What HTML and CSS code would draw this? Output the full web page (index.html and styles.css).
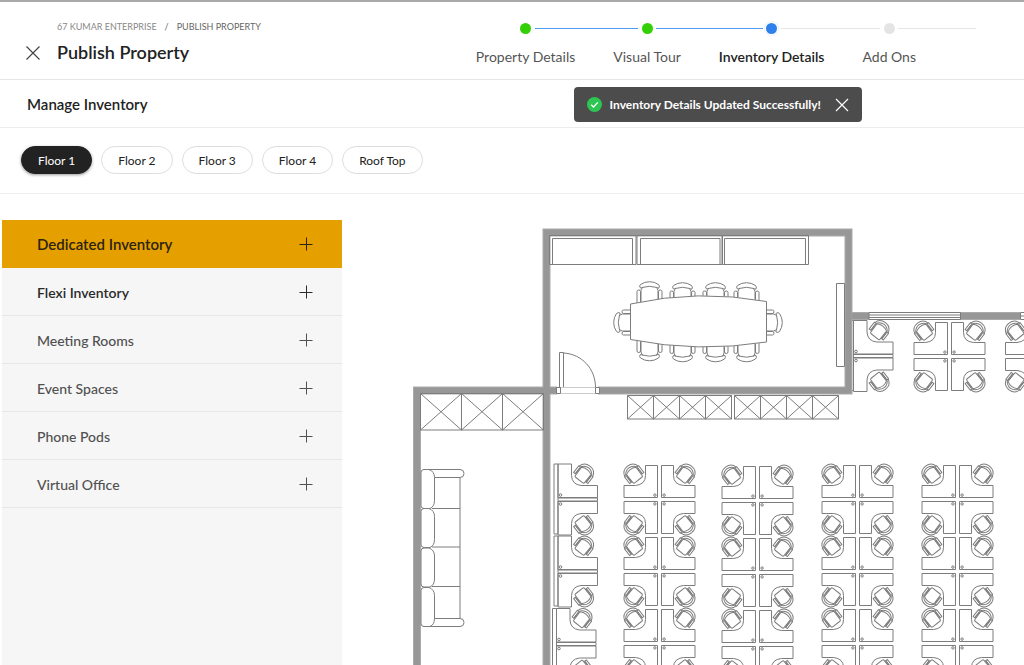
FILE: index.html
```
<!DOCTYPE html>
<html lang="en">
<head>
  <meta charset="UTF-8">
  <title>Publish Property</title>
  <link rel="stylesheet" href="styles.css">
</head>
<body>
  <header class="header">
    <button class="icon-btn close-page" aria-label="Close">
      <svg width="14" height="14" viewBox="0 0 14 14"><path d="M.5 .5l13 13M13.5 .5L.5 13.5"/></svg>
    </button>
    <div class="heading">
      <nav class="breadcrumb">
        <a href="#">67 KUMAR ENTERPRISE</a>
        <span class="slash">/</span>
        <a href="#" class="current">PUBLISH PROPERTY</a>
      </nav>
      <h1>Publish Property</h1>
    </div>
    <ol class="steps">
      <li class="step done"><i class="dot"></i>Property Details</li>
      <li class="step done"><i class="dot"></i>Visual Tour</li>
      <li class="step active"><i class="dot"></i>Inventory Details</li>
      <li class="step"><i class="dot"></i>Add Ons</li>
    </ol>
  </header>

  <div class="subheader">
    <h2>Manage Inventory</h2>
    <div class="toast" role="status">
      <svg width="15" height="15" viewBox="0 0 15 15"><circle cx="7.5" cy="7.5" r="7.5" fill="#2dc653"/><path d="M4.2 7.8l2.3 2.2 4.3-4.6" fill="none" stroke="#fff" stroke-width="1.3"/></svg>
      <span>Inventory Details Updated Successfully!</span>
      <button class="icon-btn" aria-label="Dismiss">
        <svg width="14" height="14" viewBox="0 0 14 14"><path d="M1 1l12 12M13 1L1 13"/></svg>
      </button>
    </div>
  </div>

  <div class="floors">
    <button class="floor selected">Floor 1</button>
    <button class="floor">Floor 2</button>
    <button class="floor">Floor 3</button>
    <button class="floor">Floor 4</button>
    <button class="floor">Roof Top</button>
  </div>

  <div class="content">
    <aside class="sidebar">
      <button class="item highlighted">Dedicated Inventory <svg class="plus" viewBox="0 0 14 14"><path d="M7.5 .5v13M.5 7.5h13"/></svg></button>
      <button class="item strong">Flexi Inventory <svg class="plus" viewBox="0 0 14 14"><path d="M7.5 .5v13M.5 7.5h13"/></svg></button>
      <button class="item">Meeting Rooms <svg class="plus" viewBox="0 0 14 14"><path d="M7.5 .5v13M.5 7.5h13"/></svg></button>
      <button class="item">Event Spaces <svg class="plus" viewBox="0 0 14 14"><path d="M7.5 .5v13M.5 7.5h13"/></svg></button>
      <button class="item">Phone Pods <svg class="plus" viewBox="0 0 14 14"><path d="M7.5 .5v13M.5 7.5h13"/></svg></button>
      <button class="item">Virtual Office <svg class="plus" viewBox="0 0 14 14"><path d="M7.5 .5v13M.5 7.5h13"/></svg></button>
    </aside>

    <main class="plan">
      <svg viewBox="342 194 682 471" preserveAspectRatio="xMinYMin slice" aria-label="Floor 1 plan">
        <defs>
          <!-- desk chair, back at the top -->
          <g id="chair">
            <path d="M-6 -4.5Q0 -8 6 -4.5L5.8 6Q5.6 7 4.5 7H-4.5Q-5.6 7 -5.8 6Z"/>
            <path d="M-8.5 -4Q-7 -10.5 0 -10.5T8.5 -4M-7 -4.5Q-4 -8.5 0 -8.5T7 -4.5"/>
            <path d="M-9 -4H-6.8V4.500H-9ZM9 -4H6.800V4.500H9Z"/>
            <path class="dark" d="M-7 -3V4.500M7 -3V4.500"/>
          </g>
          <g id="seat">
            <path d="M-9.5 -16Q-10.5 -17.5 -9 -19Q-5 -21.8 0 -21.8T9 -19Q10.5 -17.5 9.5 -15.5Q8.5 -14.8 7.5 -16Q0 -18.4 -7.5 -16Q-8.5 -14.8 -9.5 -16Z"/>
            <path d="M-8.5 -2V-13Q-8 -15.5 -6.5 -16.2M8.5 -2V-13Q8 -15.5 6.5 -16.2"/>
            <path d="M-12.5 0V-12Q-12.5 -13.5 -10.8 -13.5T-9 -12V0M12.5 0V-12Q12.5 -13.5 10.8 -13.5T9 -12V0"/>
          </g>
          <g id="station">
            <path d="M-14 -34H-2V-2H-35.5V-14H-24Q-14 -15 -14 -24Z"/>
            <circle cx="-4.6" cy="-4.4" r="1.2"/>
            <use href="#chair" transform="translate(-25.5 -25) rotate(-38)"/>
          </g>
          <g id="quad">
            <use href="#station"/>
            <use href="#station" transform="scale(-1 1)"/>
            <use href="#station" transform="scale(1 -1)"/>
            <use href="#station" transform="scale(-1 -1)"/>
          </g>
          <g id="wall-desk">
            <path d="M0 -35.5H13.5V-24Q14 -15 23 -14H39.5V-2H0Z"/>
            <circle cx="2.5" cy="-4.5" r="1.3"/>
            <use href="#chair" transform="translate(25.5 -25) rotate(38)"/>
          </g>
          <g id="wall-pair">
            <path d="M-4 -35.5H0V34.5H-4ZM0 -1.5H39.5V1.5H0"/>
            <use href="#wall-desk"/>
            <use href="#wall-desk" transform="scale(1 -1)"/>
          </g>
          <path id="locker" d="M0 0H41V36.5H0ZM0 0L41 36.5M41 0L0 36.5"/>
          <path id="cabinet" d="M0 0H26V23.5H0ZM0 0L26 23.5M26 0L0 23.5"/>
          <path id="cushion" d="M421 3Q421 0 424 0H429Q434.5 2 434.5 8V31Q434.5 37 430 39H424Q421 39 421 36Z"/>
          <path id="walls" d="M546.5 665V232.5H848.5V390.5H598M417 665V390.5H557M852 316H869M960 316H1020"/>
        </defs>

        <g class="lines">
          <use href="#wall-pair" x="558" y="499.5"/>
          <use href="#wall-pair" x="558" y="571.5"/>
          <use href="#wall-pair" x="556.5" y="644"/>
          <use href="#wall-pair" x="853.5" y="356"/>

          <use href="#quad" x="949.5" y="356.5"/>
          <use href="#quad" x="1041" y="356.5"/>

          <use href="#quad" x="659.5" y="499.5"/>
          <use href="#quad" x="659.5" y="571.5"/>
          <use href="#quad" x="659.5" y="643.5"/>
          <use href="#quad" x="757.5" y="500.5"/>
          <use href="#quad" x="757.5" y="572.5"/>
          <use href="#quad" x="757.5" y="644.5"/>
          <use href="#quad" x="857.5" y="499.5"/>
          <use href="#quad" x="857.5" y="571.5"/>
          <use href="#quad" x="857.5" y="643.5"/>
          <use href="#quad" x="957.5" y="499.5"/>
          <use href="#quad" x="957.5" y="571.5"/>
          <use href="#quad" x="957.5" y="643.5"/>
        </g>

        <use href="#walls" class="wall-edge"/>
        <use href="#walls" class="wall"/>

        <g class="lines">
          <!-- windows -->
          <path d="M869 312.5H960.5V319.5H869ZM869 315H960.5M869 317.5H960.5M1030 312.5H1020.5V319.5H1030M1020 316H1030"/>

          <!-- meeting room -->
          <path d="M549.5 235.5H636V264.5H549.5ZM552.5 264.5V238.5H632.5V264.5"/>
          <path d="M637 235.5H722V264.5H637ZM640.5 264.5V238.5H720V264.5"/>
          <path d="M722.5 235.5H808.5V264.5H722.5ZM724.5 264.5V238.5H805.5V264.5"/>
          <path class="fill" d="M836.5 283.5H844.5V366.5H836.5Z"/>
          <use href="#seat" x="649.5" y="303.5"/>
          <use href="#seat" x="682.5" y="304.5"/>
          <use href="#seat" x="715.5" y="304.5"/>
          <use href="#seat" x="746.5" y="304.5"/>
          <use href="#seat" transform="translate(649.5 339) scale(1 -1)"/>
          <use href="#seat" transform="translate(682.5 340) scale(1 -1)"/>
          <use href="#seat" transform="translate(715.5 340) scale(1 -1)"/>
          <use href="#seat" transform="translate(746.5 340) scale(1 -1)"/>
          <use href="#seat" transform="translate(635.5 322.5) rotate(-90)"/>
          <use href="#seat" transform="translate(760.5 322.5) rotate(90)"/>
          <path class="fill" d="M630.5 304Q698 289 766.5 301.5V342Q698 353 630.5 339.5Z"/>

          <!-- door -->
          <path d="M559.5 352.5H563.5V387.5H559.5ZM563.5 353C582 354 595.5 369 595.5 387.5"/>
          <path class="fill" d="M556.5 387.5H560.5V393.5H556.5ZM595.5 387.5H599.5V393.5H595.5Z"/>
          <path class="faint" d="M561 387.5H595M561 393.5H595"/>

          <!-- storage -->
          <use href="#locker" x="420.5" y="393.5"/>
          <use href="#locker" x="461.5" y="393.5"/>
          <use href="#locker" x="502.5" y="393.5"/>
          <use href="#cabinet" x="627.5" y="395.5"/>
          <use href="#cabinet" x="653.5" y="395.5"/>
          <use href="#cabinet" x="679.5" y="395.5"/>
          <use href="#cabinet" x="705.5" y="395.5"/>
          <use href="#cabinet" x="734.5" y="395.5"/>
          <use href="#cabinet" x="760.5" y="395.5"/>
          <use href="#cabinet" x="786.5" y="395.5"/>
          <use href="#cabinet" x="812.5" y="395.5"/>

          <!-- sofa -->
          <path d="M429 469.5H460Q464 469.5 464 473.5T460 477.5H434.5M429 626.5H460Q464 626.5 464 622.5T460 618.5H434.5M460 477.5V618.5M432 508.5H460M432 547H460M432 586.5H460"/>
          <use href="#cushion" y="469.5"/>
          <use href="#cushion" y="508.5"/>
          <use href="#cushion" y="548"/>
          <use href="#cushion" y="587.5"/>
        </g>
      </svg>
    </main>
  </div>
</body>
</html>
```
FILE: styles.css
```
* { box-sizing: border-box; }
body {
  margin: 0;
  height: 100vh;
  overflow: hidden;
  display: flex;
  flex-direction: column;
  font-family: Lato, "Open Sans", sans-serif;
  font-size: 14px;
  color: #222;
  background: #fff;
  border-top: 2px solid #a9a9a9;
}
h1, h2 { margin: 0; font-weight: 600; }
h1 { font-size: 18px; line-height: 24px; }
h2 { font-size: 15px; line-height: 20px; }
button { font: inherit; color: inherit; cursor: pointer; }
a { color: inherit; text-decoration: none; }

.icon-btn {
  display: flex;
  padding: 0;
  border: 0;
  background: none;
}
.icon-btn path { fill: none; stroke: currentColor; stroke-width: 1.2; }

/* header */
.header {
  display: flex;
  flex: none;
  height: 78px;
  padding-left: 26px;
  border-bottom: 1px solid #e6e6e6;
}
.close-page { align-self: flex-start; margin: 44px 17px 0 0; color: #444; }
.heading { padding-top: 19px; }
.breadcrumb {
  display: flex;
  gap: 8px;
  margin-bottom: 7px;
  font-size: 9px;
  line-height: 12px;
  color: #888;
}
.breadcrumb .current, .slash { color: #666; }

.steps {
  display: flex;
  gap: 38px;
  margin: 0 108px 0 auto;
  padding: 21px 0 0;
  list-style: none;
  color: #555;
}
.step {
  position: relative;
  display: flex;
  flex-direction: column;
  align-items: center;
  gap: 14px;
  line-height: 18px;
  white-space: nowrap;
}
.dot { width: 11px; height: 11px; border-radius: 50%; background: #e4e4e4; }
.done .dot { background: #34d006; }
.active .dot { background: #2f80ed; box-shadow: 0 0 0 1px #fff, 0 0 0 2px #eef2f8; }
.active { color: #222; font-weight: 600; }
.step::before, .step::after {
  content: "";
  position: absolute;
  top: 5px;
  height: 1px;
  background: #e6e6e6;
}
.step::before { left: -19px; right: calc(50% + 9px); }
.step::after { left: calc(50% + 9px); right: -19px; }
.step:first-child::before { display: none; }
.step:last-child::after { right: -60px; }
.done::before, .done::after, .active::before { background: #4f9bf5; }

.subheader {
  position: relative;
  flex: none;
  padding: 14px 27px 13px;
  border-bottom: 1px solid #ececec;
}
.toast {
  position: absolute;
  top: 7px;
  right: 162px;
  display: flex;
  align-items: center;
  gap: 8px;
  height: 35px;
  padding: 0 13px;
  border-radius: 4px;
  background: #4c4c4c;
  color: #fff;
  font-size: 12px;
  font-weight: 700;
}
.toast .icon-btn { margin-left: 6px; }

/* floor tabs */
.floors {
  display: flex;
  flex: none;
  gap: 9px;
  padding: 18px 21px 19px;
  border-bottom: 1px solid #efefef;
}
.floor {
  height: 28px;
  padding: 0 16px;
  border: 1px solid #dedede;
  border-radius: 14px;
  background: #fff;
  font-size: 12px;
}
.floor.selected {
  border-color: #222;
  background: #222;
  color: #fff;
  box-shadow: 0 1px 3px rgba(0, 0, 0, .4);
}

.content { display: flex; flex: 1; min-height: 0; }
.sidebar {
  flex: none;
  width: 340px;
  margin: 26px 0 0 2px;
  background: #f6f6f6;
}
.item {
  display: flex;
  align-items: center;
  justify-content: space-between;
  width: 100%;
  height: 48px;
  padding: 1px 29px 0 35px;
  border: 0;
  border-bottom: 1px solid #e8e8e8;
  background: none;
  color: #505050;
  font-weight: 500;
}
.strong { color: #2b2b2b; font-weight: 600; }
.highlighted {
  border-color: #e5a000;
  background: #e5a000;
  color: #2b2410;
  font-size: 15px;
  font-weight: 600;
}
.plus { width: 14px; height: 14px; }
.plus path { fill: none; stroke: currentColor; stroke-width: 1; }

/* floor plan drawing */
.plan { flex: 1; min-width: 0; }
.plan svg { display: block; width: 100%; height: 100%; }
.lines { fill: none; stroke: #7c7c7c; stroke-width: 1; }
.lines .dark { stroke: #555; stroke-width: 1.2; }
.lines .fill { fill: #fff; }
.lines .faint { stroke: #ccc; }
.wall, .wall-edge { fill: none; stroke: #979797; stroke-width: 6; }
.wall-edge { stroke: #aaa; stroke-width: 8; }
```
